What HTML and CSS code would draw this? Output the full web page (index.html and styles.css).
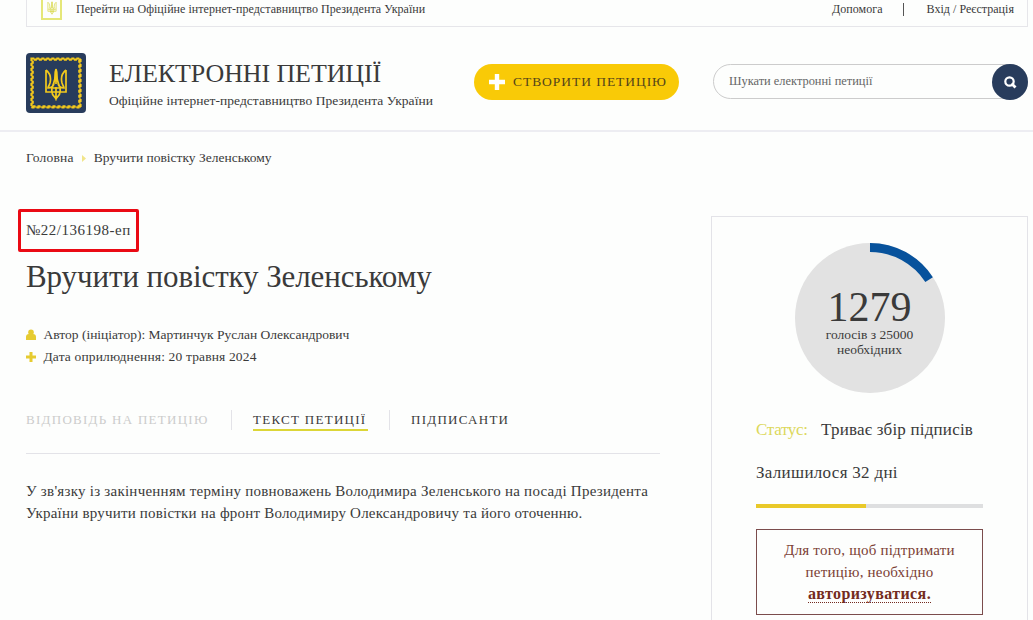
FILE: index.html
```html
<!DOCTYPE html>
<html lang="uk">
<head>
    <meta charset="UTF-8">
    <meta name="viewport" content="width=device-width, initial-scale=1.0">
    <title>Електронні петиції</title>
    <link rel="stylesheet" href="styles.css">
</head>
<body>
    <!-- Trident used in both logos -->
    <svg class="sprite" width="0" height="0">
        <symbol id="trident" viewBox="0 0 24 34">
            <path d="M2 3v22h20V3M2 3c5 4 5 9 4 13-1 3-2 4-2 5 4 0 6-2 6-6M22 3c-5 4-5 9-4 13 1 3 2 4 2 5-4 0-6-2-6-6M12 2c-2 5 0 9-2 13-1 4-3 6-2 10h8c1-4-1-6-2-10-2-4 0-8-2-13M12 2v15M8 25c0 4 3 4 4 7 1-3 4-3 4-7M12 20v12M9 21h6" fill="none" stroke="currentColor" stroke-width="1.7"/>
        </symbol>
    </svg>

    <div class="topbar">
        <a class="topbar-link" href="#">
            <span class="topbar-logo"><svg width="10" height="14"><use href="#trident"/></svg></span>
            <span class="topbar-text">Перейти на Офіційне інтернет-представництво Президента України</span>
        </a>
        <div class="topbar-user">
            <a class="help" href="#">Допомога</a>
            <span class="divider"></span>
            <a class="login" href="#">Вхід / Реєстрація</a>
        </div>
    </div>

    <header class="header">
        <a class="logo" href="#">
            <svg width="60" height="60" viewBox="0 0 60 60">
                <rect width="60" height="60" rx="4" fill="#283c5c"/>
                <rect x="6" y="6" width="48" height="48" fill="none" stroke="#a08a30" stroke-width="2"/>
                <rect x="5.3" y="5.3" width="49.4" height="49.4" fill="none" stroke="#f2c91d" stroke-width="1.8" stroke-dasharray="3 2"/>
                <rect x="6.9" y="6.9" width="46.2" height="46.2" fill="none" stroke="#f2c91d" stroke-width="1.8" stroke-dasharray="3 2" stroke-dashoffset="-1"/>
                <use href="#trident" x="18" y="14" width="24" height="34" color="#f2c91d"/>
            </svg>
        </a>
        <div class="brand">
            <div class="brand-title">ЕЛЕКТРОННІ ПЕТИЦІЇ</div>
            <div class="brand-subtitle">Офіційне інтернет-представництво Президента України</div>
        </div>
        <a class="create-button" href="#">
            <svg width="18" height="18" viewBox="0 0 18 18"><path d="M9 1v16M1 9h16" stroke="#fff" stroke-width="4.4"/></svg>
            <span>СТВОРИТИ ПЕТИЦІЮ</span>
        </a>
        <div class="search">
            <span class="search-text">Шукати електронні петиції</span>
            <button class="search-button">
                <svg width="14" height="14" viewBox="0 0 14 14" fill="none" stroke="#fff"><circle cx="6.5" cy="6.5" r="4.2" stroke-width="2.2"/><path d="M8.5 8.5l4 4" stroke-width="2.8"/></svg>
            </button>
        </div>
    </header>

    <div class="breadcrumbs">
        <a class="crumb-home" href="#">Головна</a>
        <svg width="4" height="7" viewBox="0 0 4 7"><path d="M0 0l4 3.5L0 7z" fill="#f1e58a"/></svg>
        <span class="crumb-current">Вручити повістку Зеленському</span>
    </div>

    <div class="content">
        <main class="petition">
            <div class="petition-number"><span>№22/136198-еп</span></div>
            <h1>Вручити повістку Зеленському</h1>
            <div class="meta">
                <svg width="10" height="12" viewBox="0 0 10 12" fill="#e6cb31"><circle cx="5" cy="3.3" r="2.8"/><path d="M0 11V8q0-3 3-3h4q3 0 3 3v3z"/></svg>
                <span class="author">Автор (ініціатор): Мартинчук Руслан Олександрович</span>
            </div>
            <div class="meta">
                <svg width="10" height="10" viewBox="0 0 10 10"><path d="M5 0v10M0 5h10" stroke="#e6cb31" stroke-width="3"/></svg>
                <span class="date">Дата оприлюднення: 20 травня 2024</span>
            </div>
            <nav class="tabs">
                <span class="tab tab-disabled">ВІДПОВІДЬ НА ПЕТИЦІЮ</span>
                <span class="tab tab-active"><span>ТЕКСТ ПЕТИЦІЇ</span></span>
                <span class="tab tab-signers">ПІДПИСАНТИ</span>
            </nav>
            <p class="petition-text"><span class="line-one">У зв'язку із закінченням терміну повноважень Володимира Зеленського на посаді Президента</span><br><span class="line-two">України вручити повістки на фронт Володимиру Олександровичу та його оточенню.</span></p>
        </main>

        <aside class="card">
            <div class="votes">
                <svg class="votes-ring" width="150" height="150" viewBox="0 0 150 150">
                    <circle cx="75" cy="75" r="75" fill="#e2e2e2"/>
                    <path d="M75 4.5A70.5 70.5 0 0 1 134.1 36.6" fill="none" stroke="#07529c" stroke-width="9"/>
                </svg>
                <div class="votes-label">
                    <div class="votes-count">1279</div>
                    <div class="votes-goal">голосів з 25000</div>
                    <div class="votes-needed">необхідних</div>
                </div>
            </div>
            <div class="status"><span class="status-name">Статус:</span><span class="status-value">Триває збір підписів</span></div>
            <div class="days">Залишилося 32 дні</div>
            <div class="progress"><div class="progress-bar"></div></div>
            <div class="notice">
                <span class="notice-one">Для того, щоб підтримати</span><br>
                <span class="notice-two">петицію, необхідно</span><br>
                <a href="#">авторизуватися.</a>
            </div>
        </aside>
    </div>
</body>
</html>
```

FILE: styles.css
```css
* {
    margin: 0;
    padding: 0;
    box-sizing: border-box;
}
body {
    width: 1033px;
    height: 620px;
    overflow: hidden;
    font-family: "Liberation Serif", serif;
    font-size: 13.5px;
    color: #3a3a3a;
    background-color: #fdfefd;
    white-space: nowrap;
}
a {
    color: inherit;
    text-decoration: none;
}
svg {
    flex-shrink: 0;
}
.sprite {
    display: block;
}
/* Top bar */
.topbar {
    display: flex;
    justify-content: space-between;
    width: 1002px;
    height: 27px;
    margin-left: 26px;
    padding: 0 13px 0 14px;
    border: 1px solid #e6e6ea;
    border-top: none;
    font-size: 12px;
    letter-spacing: 0.03px;
}
.topbar-link, .topbar-user {
    display: flex;
    align-items: center;
    height: 19px;
}
.topbar-logo {
    display: flex;
    align-items: flex-end;
    justify-content: center;
    width: 21px;
    height: 20px;
    margin-right: 14px;
    padding-bottom: 3px;
    border: 2px solid #e5e778;
    border-top: none;
    color: #d8d94c;
}
.divider {
    width: 1px;
    height: 13px;
    margin: 0 23px 0 20px;
    background-color: #555;
}
/* Header */
.header {
    display: flex;
    align-items: flex-start;
    height: 105px;
    padding: 26px 0 0 26px;
    border-bottom: 2px solid #ededf2;
}
.logo {
    height: 60px;
}
.brand {
    width: 365px;
    margin-left: 23px;
    padding-top: 6px;
}
.brand-title {
    font-size: 26px;
    line-height: 30px;
    letter-spacing: -0.1px;
}
.brand-subtitle {
    margin-top: 4px;
    line-height: 16px;
    letter-spacing: 0.04px;
}
.create-button {
    display: flex;
    align-items: center;
    width: 205px;
    height: 36px;
    margin-top: 11px;
    padding-left: 14px;
    border-radius: 18px;
    background-color: #f9ca07;
    color: #54451a;
    letter-spacing: 0.95px;
}
.create-button span {
    margin-left: 7px;
}
.search {
    display: flex;
    align-items: center;
    justify-content: space-between;
    width: 315px;
    height: 35px;
    margin: 11px 0 0 34px;
    padding-left: 15px;
    border: 1px solid #ccc;
    border-radius: 18px;
    color: #666;
    font-size: 12.4px;
}
.search-button {
    display: flex;
    align-items: center;
    justify-content: center;
    width: 36px;
    height: 36px;
    margin-right: -1px;
    border: none;
    border-radius: 50%;
    background-color: #283c5c;
}
.breadcrumbs {
    display: flex;
    align-items: center;
    height: 16px;
    margin: 18px 0 0 26px;
}
.breadcrumbs svg {
    margin: 0 8px;
}
.crumb-home {
    letter-spacing: 0.2px;
}
.content {
    display: flex;
    align-items: flex-start;
}
/* Petition */
.petition {
    width: 642px;
    margin: 43px 51px 0 18px;
    padding-left: 8px;
}
.petition-number {
    display: flex;
    align-items: center;
    width: 121px;
    height: 43px;
    margin-left: -8px;
    padding-left: 5px;
    border: 3px solid #ea0a14;
    border-radius: 2px;
    font-size: 15px;
    letter-spacing: 0.5px;
}
h1 {
    margin: 9px 0 31px;
    font-size: 31px;
    font-weight: normal;
    line-height: 32px;
    letter-spacing: -0.1px;
}
.meta {
    display: flex;
    align-items: center;
    height: 22px;
}
.meta span {
    margin-left: 7.5px;
}
.date {
    letter-spacing: 0.15px;
}
.tabs {
    display: flex;
    align-items: center;
    height: 68px;
    margin-top: 18px;
    border-bottom: 1px solid #e3e3e8;
    font-size: 13px;
    letter-spacing: 1.28px;
}
.tab {
    height: 20px;
    line-height: 20px;
}
.tab-disabled {
    width: 205px;
    color: #ccc;
}
.tab-active {
    width: 158px;
    padding-left: 21px;
    border-left: 1px solid #e3e3e8;
}
.tab-active span {
    display: block;
    width: 115px;
    height: 21px;
    border-bottom: 2px solid #dcd637;
}
.tab-signers {
    padding-left: 21px;
    border-left: 1px solid #e3e3e8;
}
.petition-text {
    margin-top: 26px;
    font-size: 15px;
    line-height: 22px;
}
.line-one {
    letter-spacing: 0.25px;
}
.line-two {
    letter-spacing: 0.21px;
}
/* Side card */
.card {
    width: 317px;
    height: 420px;
    margin-top: 50px;
    padding: 26px 44px 0;
    border: 1px solid #e3e3e8;
}
.votes {
    position: relative;
    width: 150px;
    height: 150px;
    margin: 0 auto;
}
.votes-label {
    position: absolute;
    top: 44px;
    left: 0;
    width: 100%;
    text-align: center;
    line-height: 15px;
}
.votes-count {
    font-size: 42px;
    line-height: 40px;
}
.status {
    margin-top: 27px;
    font-size: 17px;
    line-height: 20px;
}
.status-name {
    display: inline-block;
    width: 65px;
    color: #dcd85c;
    letter-spacing: -0.3px;
}
.status-value {
    letter-spacing: 0.2px;
}
.days {
    margin-top: 23px;
    font-size: 17px;
    line-height: 20px;
    letter-spacing: 0.3px;
}
.progress {
    height: 4px;
    margin-top: 21px;
    background-color: #dedfe0;
}
.progress-bar {
    width: 110px;
    height: 4px;
    background-color: #e9c929;
}
.notice {
    height: 86px;
    margin-top: 21px;
    padding-top: 9px;
    border: 1px solid #7b4c4c;
    color: #7b4034;
    font-size: 15px;
    line-height: 22px;
    letter-spacing: 0.2px;
    text-align: center;
}
.notice a {
    color: #742b20;
    font-size: 16px;
    font-weight: bold;
    letter-spacing: 0.4px;
    border-bottom: 1px dotted #742b20;
}
```
